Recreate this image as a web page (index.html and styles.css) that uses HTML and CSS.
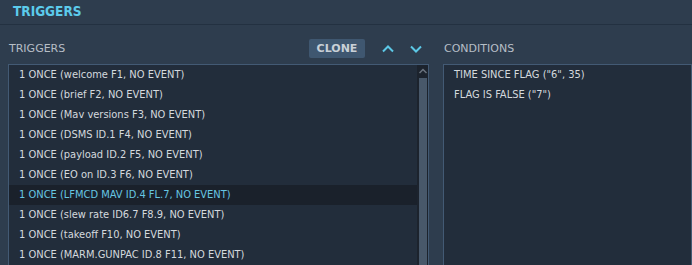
FILE: index.html
```html
<!DOCTYPE html>
<html lang="en">
<head>
    <meta charset="UTF-8">
    <title>Triggers</title>
    <link rel="stylesheet" href="styles.css">
</head>
<body>
<div class="header">TRIGGERS</div>
<div class="panels">
    <div class="panel panel-triggers">
        <div class="panel-head">
            <span class="label">TRIGGERS</span>
            <button class="btn-clone">CLONE</button>
            <span class="arrow">
                <svg width="12" height="8" viewBox="0 0 12 8"><path d="M1 6.5 L6 1.5 L11 6.5" fill="none" stroke="#5cc8e6" stroke-width="2"/></svg>
            </span>
            <span class="arrow">
                <svg width="12" height="8" viewBox="0 0 12 8"><path d="M1 1.5 L6 6.5 L11 1.5" fill="none" stroke="#5cc8e6" stroke-width="2"/></svg>
            </span>
        </div>
        <div class="box">
            <ul class="list">
                <li>1 ONCE (welcome F1, NO EVENT)</li>
                <li>1 ONCE (brief F2, NO EVENT)</li>
                <li>1 ONCE (Mav versions F3, NO EVENT)</li>
                <li>1 ONCE (DSMS ID.1 F4, NO EVENT)</li>
                <li>1 ONCE (payload ID.2 F5, NO EVENT)</li>
                <li>1 ONCE (EO on ID.3 F6, NO EVENT)</li>
                <li class="selected">1 ONCE (LFMCD MAV ID.4 FL.7, NO EVENT)</li>
                <li>1 ONCE (slew rate ID6.7 F8.9, NO EVENT)</li>
                <li>1 ONCE (takeoff F10, NO EVENT)</li>
                <li>1 ONCE (MARM.GUNPAC ID.8 F11, NO EVENT)</li>
            </ul>
            <div class="scrollbar">
                <svg class="scroll-up" width="10" height="6" viewBox="0 0 10 6"><path d="M1.5 5 L5 1.5 L8.5 5" fill="none" stroke="#6a737e" stroke-width="1.5"/></svg>
                <div class="thumb"></div>
            </div>
        </div>
    </div>
    <div class="panel panel-conditions">
        <div class="panel-head">
            <span class="label">CONDITIONS</span>
        </div>
        <div class="box">
            <ul class="list">
                <li>TIME SINCE FLAG ("6", 35)</li>
                <li>FLAG IS FALSE ("7")</li>
            </ul>
        </div>
    </div>
</div>
</body>
</html>
```

FILE: styles.css
```css
html, body {
    margin: 0;
    padding: 0;
}

body {
    width: 692px;
    height: 265px;
    overflow: hidden;
    background-color: #2e3d4e;
    font-family: "DejaVu Sans", Verdana, sans-serif;
    color: #d6dbe0;
}

.header {
    height: 25px;
    line-height: 22px;
    padding-left: 13px;
    box-sizing: border-box;
    border-bottom: 1px solid #233141;
    font-family: "DejaVu Sans Condensed", "DejaVu Sans", sans-serif;
    font-stretch: condensed;
    font-size: 13.5px;
    font-weight: bold;
    color: #5ccbec;
}

.panels {
    display: flex;
    padding: 13px 0 0 8px;
    gap: 14px;
}

.panel {
    display: flex;
    flex-direction: column;
}

.panel-triggers {
    width: 421px;
}

.panel-conditions {
    flex: 1;
}

.panel-head {
    display: flex;
    align-items: center;
    height: 21px;
    margin-bottom: 5px;
}

.label {
    font-size: 11px;
    color: #b6bec6;
    padding-left: 1px;
    flex: 1;
}

.btn-clone {
    width: 56px;
    height: 19px;
    padding: 0;
    border: none;
    border-radius: 2px;
    background-color: #3f5770;
    color: #c9d0d7;
    font-family: "DejaVu Sans", Verdana, sans-serif;
    font-size: 11px;
    font-weight: bold;
    margin-right: 17px;
}

.arrow {
    display: flex;
    width: 12px;
    margin-right: 16px;
}

.arrow:last-child {
    margin-right: 7px;
}

.box {
    display: flex;
    height: 210px;
    border: 1px solid #435a74;
    border-bottom: none;
    background-color: #222d3b;
}

.list {
    flex: 1;
    list-style: none;
    margin: 0;
    padding: 0;
}

.list li {
    height: 20px;
    line-height: 20px;
    padding-left: 10px;
    font-family: "DejaVu Sans Condensed", "DejaVu Sans", sans-serif;
    font-stretch: condensed;
    font-size: 11px;
    color: #d4d9de;
    white-space: nowrap;
}

.list li.selected {
    background-color: #1a212b;
    color: #67c6e2;
}

.scrollbar {
    width: 11px;
    background-color: #1c232d;
    display: flex;
    flex-direction: column;
    align-items: center;
}

.scroll-up {
    margin-top: 3px;
    margin-bottom: 4px;
}

.thumb {
    width: 8px;
    flex: 1;
    background-color: #48586a;
}
```
